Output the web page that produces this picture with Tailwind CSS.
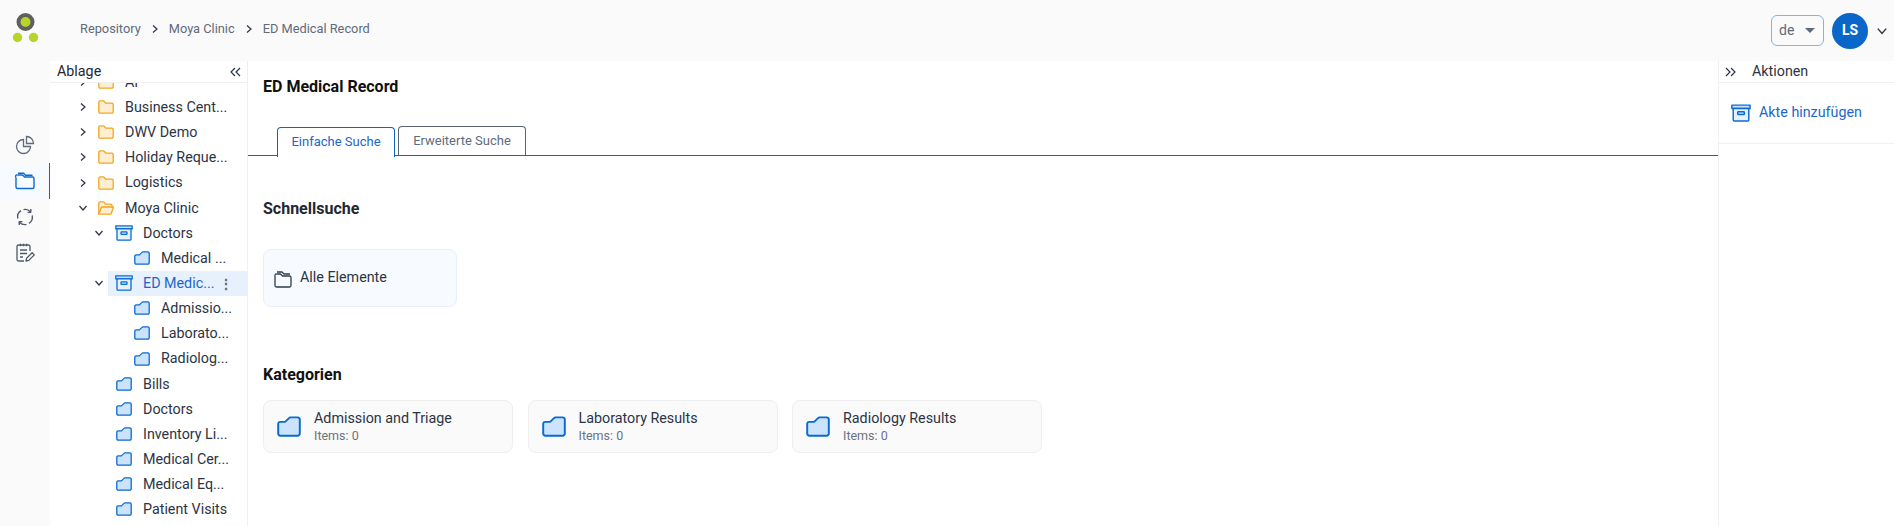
<!DOCTYPE html>
<html lang="de">
<head>
  <meta charset="UTF-8">
  <title>ED Medical Record</title>
  <script src="https://cdn.jsdelivr.net/npm/@tailwindcss/browser@4"></script>
</head>
<body class="h-[526px] w-[1894px] overflow-hidden flex flex-col bg-[#fafafa] font-['Roboto',sans-serif] text-[14.300px] text-[#2b3445]">

  <svg class="hidden">
    <symbol id="folder-blue" viewBox="0 0 16 14"><path d="M.8 5.200A1.300 1.300 0 0 1 2.100 3.900H5.400L8 1.400a1.500 1.500 0 0 1 1-.5h4.800A1.400 1.400 0 0 1 15.200 2.300V11.700a1.400 1.400 0 0 1-1.400 1.400H2.200A1.400 1.400 0 0 1 .8 11.700Z" fill="#cbe3fc" stroke="#0a6ad2" stroke-width="1.300" stroke-linejoin="round"/></symbol>
    <symbol id="folder-yellow" viewBox="0 0 16 14"><path d="M.8 2.300A1.400 1.400 0 0 1 2.200 .9H5.500a1 1 0 0 1 .8.400L7.700 3.100h6.100A1.400 1.400 0 0 1 15.200 4.500v7.200a1.400 1.400 0 0 1-1.400 1.400H2.200A1.400 1.400 0 0 1 .8 11.700Z" fill="#ffeed2" stroke="#f3a51e" stroke-width="1.300" stroke-linejoin="round"/></symbol>
    <symbol id="archive" viewBox="0 0 18 16"><g fill="none" stroke="#0a6ad2" stroke-width="1.300" stroke-linejoin="round"><path d="M.8 .9h16.400v3H.8Z" fill="#cbe3fc"/><path d="M2 3.900h14v10.300a1 1 0 0 1-1 1H3a1 1 0 0 1-1-1Z" fill="#e6f1fd"/><rect x="6" y="6.800" width="6" height="2.600" rx=".6" fill="#cbe3fc"/></g></symbol>
    <symbol id="chev-right" viewBox="0 0 10 10"><path d="M3 1.500 7 5 3 8.500" fill="none" stroke="#2b3445" stroke-width="1.200"/></symbol>
    <symbol id="chev-down" viewBox="0 0 10 10"><path d="M1.500 3 5 7 8.500 3" fill="none" stroke="#2b3445" stroke-width="1.200"/></symbol>
    <symbol id="chevs-left" viewBox="0 0 11 10"><path d="M5 1 1 5l4 4M10 1 6 5l4 4" fill="none" stroke="#2b3445" stroke-width="1.200"/></symbol>
    <symbol id="chevs-right" viewBox="0 0 11 10"><path d="M1 1l4 4-4 4M6 1l4 4-4 4" fill="none" stroke="#2b3445" stroke-width="1.200"/></symbol>
  </svg>

  <header class="h-[61px] shrink-0 flex items-center">
    <div class="w-[50px] flex justify-center">
      <svg width="34" height="36" viewBox="0 0 34 36">
        <circle cx="17.500" cy="9" r="7" fill="#b6d42a" stroke="#5f5f5f" stroke-width="4"/>
        <circle cx="9.500" cy="24.500" r="4.700" fill="#b6d42a"/>
        <circle cx="25.500" cy="24.500" r="4.700" fill="#b6d42a"/>
      </svg>
    </div>
    <nav class="ml-[30px] flex items-center text-[12.800px] text-[#5f6b7a] -mt-[4px]">
      <span>Repository</span>
      <svg class="w-[10px] h-[10px] mx-[9px]"><use href="#chev-right"/></svg>
      <span>Moya Clinic</span>
      <svg class="w-[10px] h-[10px] mx-[9px]"><use href="#chev-right"/></svg>
      <span>ED Medical Record</span>
    </nav>
    <div class="ml-auto flex items-center">
      <div class="w-[53px] h-[31px] border border-[#7ab6f2] rounded-[6px] flex items-center justify-between pl-[7px] pr-[8px] text-[#5f6b7a] text-[14px]">
        <span>de</span>
        <span class="w-0 h-0 border-x-[5px] border-x-transparent border-t-[5px] border-t-[#5f6b7a]"></span>
      </div>
      <div class="ml-[8px] w-[36px] h-[36px] rounded-full bg-[#0a66c8] text-white font-bold text-[14px] flex items-center justify-center">LS</div>
      <svg class="w-[12px] h-[12px] ml-[8px] mr-[6px]"><use href="#chev-down"/></svg>
    </div>
  </header>

  <div class="flex-1 flex min-h-0">
    <div class="w-[50px] shrink-0 pt-[66px] flex flex-col">
      <div class="h-[36px] flex items-center justify-center">
        <svg width="20" height="20" viewBox="0 0 20 20" fill="none" stroke="#5f6b7a" stroke-width="1.300"><path d="M8.500 4.500a7 7 0 1 0 7 7h-7Z"/><path d="M11.500 1.500a7 7 0 0 1 7 7h-7Z"/></svg>
      </div>
      <div class="h-[36px] flex items-center justify-center bg-[#f7faff] border-r-[1.500px] border-[#0a66c8]">
        <svg width="20" height="18" viewBox="0 0 20 18" fill="none" stroke="#0a6ad2" stroke-width="1.400" stroke-linejoin="round"><path d="M1 5.500V15a1.500 1.500 0 0 0 1.500 1.500h15A1.500 1.500 0 0 0 19 15V6.500A1.500 1.500 0 0 0 17.500 5H9.500L7.500 3H2.500"/><path d="M1 5.500A1.500 1.500 0 0 1 2.500 3M3 1.200h5.500l2 2h7"/></svg>
      </div>
      <div class="h-[36px] flex items-center justify-center">
        <svg width="20" height="20" viewBox="0 0 20 20" fill="none" stroke="#4f5b6a" stroke-width="1.400" stroke-linejoin="round"><path d="M2.800 11.500A7.500 7.500 0 0 1 6 3.600"/><path d="M8.500 2.600A7.500 7.500 0 0 1 15.500 4.800"/><path d="M12.600 5.400 15.800 5.200 15.800 1.900"/><path d="M17.200 8.500A7.500 7.500 0 0 1 14 16.400"/><path d="M11.500 17.400A7.500 7.500 0 0 1 4.500 15.200"/><path d="M7.400 14.600 4.200 14.800 4.200 18.100"/></svg>
      </div>
      <div class="h-[36px] flex items-center justify-center">
        <svg width="20" height="20" viewBox="0 0 20 20" fill="none" stroke="#4f5b6a" stroke-width="1.300" stroke-linejoin="round"><path d="M15 8V3.500A1.500 1.500 0 0 0 13.500 2h-10A1.500 1.500 0 0 0 2 3.500v13A1.500 1.500 0 0 0 3.500 18H9"/><path d="M5.500 .8v2.500M8.500 .8v2.500M11.500 .8v2.500M5 7h7M5 10.500h7M5 14h3"/><path d="M11 18l.6-2.800 5.500-5.500 2.200 2.200-5.500 5.500Z"/></svg>
      </div>
    </div>

    <aside class="w-[198px] shrink-0 bg-white border-r border-[#f0f0f0] flex flex-col overflow-hidden">
      <div class="relative z-10 h-[22px] shrink-0 bg-white border-b border-[#f0f0f0] flex items-center justify-between pl-[7px] pr-[6px] text-[#1f2733]">
        <span>Ablage</span>
        <svg class="w-[11px] h-[10px]"><use href="#chevs-left"/></svg>
      </div>
      <div class="-mt-[13.500px] [&_span]:mt-[1px]">
        <div class="h-[25.150px] flex items-center pl-[28px]"><svg class="w-[10px] h-[10px] mr-[10px]"><use href="#chev-right"/></svg><svg class="w-[16px] h-[14px] mr-[11px]"><use href="#folder-yellow"/></svg><span>AI</span></div>
        <div class="h-[25.150px] flex items-center pl-[28px]"><svg class="w-[10px] h-[10px] mr-[10px]"><use href="#chev-right"/></svg><svg class="w-[16px] h-[14px] mr-[11px]"><use href="#folder-yellow"/></svg><span>Business Cent...</span></div>
        <div class="h-[25.150px] flex items-center pl-[28px]"><svg class="w-[10px] h-[10px] mr-[10px]"><use href="#chev-right"/></svg><svg class="w-[16px] h-[14px] mr-[11px]"><use href="#folder-yellow"/></svg><span>DWV Demo</span></div>
        <div class="h-[25.150px] flex items-center pl-[28px]"><svg class="w-[10px] h-[10px] mr-[10px]"><use href="#chev-right"/></svg><svg class="w-[16px] h-[14px] mr-[11px]"><use href="#folder-yellow"/></svg><span>Holiday Reque...</span></div>
        <div class="h-[25.150px] flex items-center pl-[28px]"><svg class="w-[10px] h-[10px] mr-[10px]"><use href="#chev-right"/></svg><svg class="w-[16px] h-[14px] mr-[11px]"><use href="#folder-yellow"/></svg><span>Logistics</span></div>
        <div class="h-[25.150px] flex items-center pl-[28px]"><svg class="w-[10px] h-[10px] mr-[10px]"><use href="#chev-down"/></svg><svg class="w-[16px] h-[14px] mr-[11px]" viewBox="0 0 16 14" fill="#ffeed2" stroke="#f3a51e" stroke-width="1.300" stroke-linejoin="round"><path d="M.8 13V2.300A1.400 1.400 0 0 1 2.200 .9H5.500a1 1 0 0 1 .8.400L7.700 3.100h4.900A1.400 1.400 0 0 1 14 4.500V6"/><path d="M.8 13.100 3.500 6H15.500L13 13.100Z"/></svg><span>Moya Clinic</span></div>
        <div class="h-[25.150px] flex items-center pl-[44px]"><svg class="w-[10px] h-[10px] mr-[11px]"><use href="#chev-down"/></svg><svg class="w-[18px] h-[16px] mr-[10px]"><use href="#archive"/></svg><span>Doctors</span></div>
        <div class="h-[25.150px] flex items-center pl-[84px]"><svg class="w-[16px] h-[14px] mr-[11px]"><use href="#folder-blue"/></svg><span>Medical ...</span></div>
        <div class="h-[25.150px] flex items-center pl-[44px]">
          <svg class="w-[10px] h-[10px] mr-[4px]"><use href="#chev-down"/></svg>
          <div class="flex-1 h-full bg-[#e6f1fd] flex items-center pl-[7px] text-[#1d66c9]"><svg class="w-[18px] h-[16px] mr-[10px]"><use href="#archive"/></svg><span>ED Medic...</span><span class="ml-auto mr-[14px] text-[#5f6b7a] font-bold leading-none">⋮</span></div>
        </div>
        <div class="h-[25.150px] flex items-center pl-[84px]"><svg class="w-[16px] h-[14px] mr-[11px]"><use href="#folder-blue"/></svg><span>Admissio...</span></div>
        <div class="h-[25.150px] flex items-center pl-[84px]"><svg class="w-[16px] h-[14px] mr-[11px]"><use href="#folder-blue"/></svg><span>Laborato...</span></div>
        <div class="h-[25.150px] flex items-center pl-[84px]"><svg class="w-[16px] h-[14px] mr-[11px]"><use href="#folder-blue"/></svg><span>Radiolog...</span></div>
        <div class="h-[25.150px] flex items-center pl-[66px]"><svg class="w-[16px] h-[14px] mr-[11px]"><use href="#folder-blue"/></svg><span>Bills</span></div>
        <div class="h-[25.150px] flex items-center pl-[66px]"><svg class="w-[16px] h-[14px] mr-[11px]"><use href="#folder-blue"/></svg><span>Doctors</span></div>
        <div class="h-[25.150px] flex items-center pl-[66px]"><svg class="w-[16px] h-[14px] mr-[11px]"><use href="#folder-blue"/></svg><span>Inventory Li...</span></div>
        <div class="h-[25.150px] flex items-center pl-[66px]"><svg class="w-[16px] h-[14px] mr-[11px]"><use href="#folder-blue"/></svg><span>Medical Cer...</span></div>
        <div class="h-[25.150px] flex items-center pl-[66px]"><svg class="w-[16px] h-[14px] mr-[11px]"><use href="#folder-blue"/></svg><span>Medical Eq...</span></div>
        <div class="h-[25.150px] flex items-center pl-[66px]"><svg class="w-[16px] h-[14px] mr-[11px]"><use href="#folder-blue"/></svg><span>Patient Visits</span></div>
      </div>
    </aside>

    <main class="flex-1 bg-white flex flex-col min-w-0">
      <h1 class="mt-[16px] ml-[15px] text-[16px] leading-[19px] font-bold text-[#111]">ED Medical Record</h1>
      <div class="mt-[30px] pl-[29px] flex items-end gap-[3px] border-b-[1.500px] border-[#0a66c8] h-[30px] text-[13px]">
        <div class="w-[118px] h-[30px] -mb-[1.500px] bg-white border-[1.500px] border-b-0 border-[#0a66c8] rounded-t-[4px] flex items-center justify-center text-[#1d66c9]">Einfache Suche</div>
        <div class="w-[128px] h-[29px] border-[1.500px] border-b-0 border-[#5a6572] rounded-t-[4px] flex items-center justify-center text-[#5f6b7a]">Erweiterte Suche</div>
      </div>
      <h2 class="mt-[43px] ml-[15px] text-[16px] leading-[20px] font-bold text-[#1f2733]">Schnellsuche</h2>
      <div class="mt-[30px] ml-[15px] w-[194px] h-[58px] bg-[#f7faff] border border-[#e6f0fb] rounded-[8px] flex items-center pl-[10px]">
        <svg class="mr-[8px] mt-[2px]" width="18" height="17" viewBox="0 0 18 17" fill="none" stroke="#2f3d4f" stroke-width="1.300" stroke-linejoin="round"><path d="M1 5v9.500A1.500 1.500 0 0 0 2.500 16h13a1.500 1.500 0 0 0 1.500-1.500v-8A1.500 1.500 0 0 0 15.500 5h-7L6.500 3H2.500"/><path d="M1 5a1.500 1.500 0 0 1 1.500-2M3 1h5l2 2h6"/></svg>
        <span>Alle Elemente</span>
      </div>
      <h2 class="mt-[58px] ml-[15px] text-[16px] leading-[20px] font-bold text-[#111]">Kategorien</h2>
      <div class="mt-[15px] ml-[15px] flex gap-[14.500px]">
        <div class="w-[250px] h-[53px] bg-[#fafafa] border border-[#eeeeee] rounded-[8px] flex items-center pl-[13px]">
          <svg class="w-[24px] h-[21px] mr-[13px]"><use href="#folder-blue"/></svg>
          <div class="pb-[2px]"><div class="leading-[19px]">Admission and Triage</div><div class="text-[12.500px] leading-[15px] text-[#6b7280]">Items: 0</div></div>
        </div>
        <div class="w-[250px] h-[53px] bg-[#fafafa] border border-[#eeeeee] rounded-[8px] flex items-center pl-[13px]">
          <svg class="w-[24px] h-[21px] mr-[13px]"><use href="#folder-blue"/></svg>
          <div class="pb-[2px]"><div class="leading-[19px]">Laboratory Results</div><div class="text-[12.500px] leading-[15px] text-[#6b7280]">Items: 0</div></div>
        </div>
        <div class="w-[250px] h-[53px] bg-[#fafafa] border border-[#eeeeee] rounded-[8px] flex items-center pl-[13px]">
          <svg class="w-[24px] h-[21px] mr-[13px]"><use href="#folder-blue"/></svg>
          <div class="pb-[2px]"><div class="leading-[19px]">Radiology Results</div><div class="text-[12.500px] leading-[15px] text-[#6b7280]">Items: 0</div></div>
        </div>
      </div>
    </main>

    <aside class="w-[176px] shrink-0 bg-white border-l border-[#f0f0f0] flex flex-col">
      <div class="h-[22px] border-b border-[#f0f0f0] flex items-center pl-[6px]">
        <svg class="w-[11px] h-[10px] mr-[16px]"><use href="#chevs-right"/></svg>
        <span>Aktionen</span>
      </div>
      <div class="h-[61px] border-b border-[#f0f0f0] flex items-center pl-[12px] text-[#1d66c9]">
        <svg class="w-[20px] h-[18px] mr-[8px]"><use href="#archive"/></svg>
        <span>Akte hinzufügen</span>
      </div>
    </aside>
  </div>
</body>
</html>
